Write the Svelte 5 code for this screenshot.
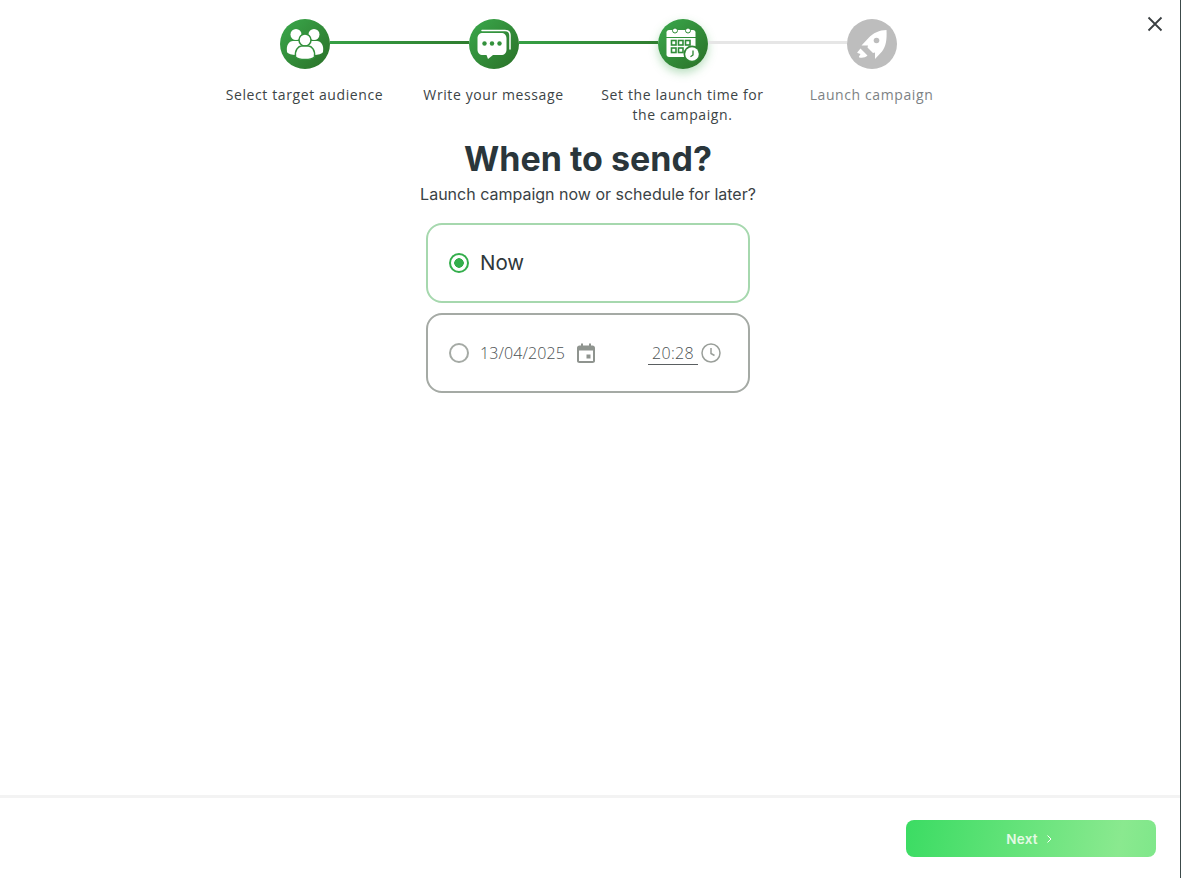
<script>
  const steps = [
    { icon: 'users', label: 'Select target audience', state: 'done' },
    { icon: 'chat', label: 'Write your message', state: 'done' },
    { icon: 'calendar', label: 'Set the launch time for the campaign.', state: 'current' },
    { icon: 'rocket', label: 'Launch campaign', state: 'todo' }
  ];
  const squares = [[13.5, 21.5], [20.5, 21.5], [27.5, 21.5], [13.5, 29], [20.5, 29]];
</script>

<div class="page">
  <button class="close" aria-label="Close">
    <svg width="16" height="16" viewBox="0 0 16 16"><path d="M1.500 1.500l13 13M14.500 1.500l-13 13" /></svg>
  </button>

  <main>
    <ol class="stepper">
      {#each steps as step, i}
        <li class="step {step.state}" class:last={i === steps.length - 1}>
          <div class="badge">
            <svg viewBox="0 0 50 50" width="50" height="50">
              {#if step.icon === 'users'}
                <circle cx="16" cy="15.500" r="5.500" fill="#fff" />
                <circle cx="34" cy="15.500" r="5.500" fill="#fff" />
                <path d="M7 33c-1-7 2-11 6-11h24c4 0 7 4 6 11-1 2-5 3-9 3H16c-4 0-8-1-9-3z" fill="#fff" />
                <circle cx="25" cy="21" r="6" fill="#fff" stroke="#33913c" stroke-width="1.500" />
                <path d="M15.500 38c-1-7 3-11 6-11h7c3 0 7 4 6 11-2 2-5 2.500-9.500 2.500s-7.500-.5-9.500-2.500z" fill="#fff" stroke="#33913c" stroke-width="1.500" />
              {:else if step.icon === 'chat'}
                <path d="M13 11.500h23c3 0 5 2 5 5V30" fill="none" stroke="#fff" stroke-width="1.500" stroke-linecap="round" />
                <path d="M14 14h18c3.500 0 5.500 2 5.500 5.500v11c0 3.500-2 5.500-5.500 5.500h-8l-5 4-1.500-4H14c-3.500 0-5.500-2-5.500-5.500v-11C8.500 16 10.500 14 14 14z" fill="#fff" />
                <circle cx="15.500" cy="24.500" r="2.200" fill="#33913c" />
                <circle cx="23" cy="24.500" r="2.200" fill="#33913c" />
                <circle cx="30.500" cy="24.500" r="2.200" fill="#33913c" />
              {:else if step.icon === 'calendar'}
                <path d="M11 11h24c1.500 0 2.500 1 2.500 2.500V18h-29v-4.500C8.500 12 9.500 11 11 11z" fill="#fff" />
                <path d="M8.500 19h29V31l-8 7H11c-1.500 0-2.500-1-2.500-2.500z" fill="#fff" />
                <circle cx="17" cy="11.500" r="2.500" fill="#fff" stroke="#2f8c38" />
                <circle cx="30" cy="11.500" r="2.500" fill="#fff" stroke="#2f8c38" />
                {#each squares as [x, y]}
                  <rect x={x} y={y} width="4.500" height="4.500" fill="none" stroke="#2f8c38" stroke-width="1.600" />
                {/each}
                <circle cx="34" cy="35" r="8.500" fill="#2f8633" />
                <circle cx="34" cy="35" r="6.800" fill="#fff" />
                <path d="M35 31.500V36l-2.500 1.800" fill="none" stroke="#2f8633" stroke-width="1.300" />
              {:else}
                <path d="M39.500 11c-7 0-13.500 3-18 8l-7 7.500h6.500l-.5 2 5.500 5.500 2-.5V40l7-7.500c4-5 5-12 4.500-21.500z" fill="#fff" />
                <circle cx="29.500" cy="21.500" r="2.800" fill="#bdbdbd" />
                <path d="M13.500 29.500l7 7c-2 2-5 2.500-8 2-.5 0-.5-.5-.5-1l1.500-2.500-3-1c-.5-.5 0-1 .5-1.500z" fill="#fff" />
              {/if}
            </svg>
          </div>
          <p class="label">{step.label}</p>
        </li>
      {/each}
    </ol>

    <h1>When to send?</h1>
    <p class="subtitle">Launch campaign now or schedule for later?</p>

    <div class="options">
      <label class="option selected">
        <span class="radio"></span>
        <span class="now">Now</span>
      </label>
      <div class="option later">
        <span class="radio"></span>
        <span class="date">13/04/2025</span>
        <svg class="cal" width="20" height="20" viewBox="0 0 20 20">
          <path d="M5 0.500h2V2.500h6V0.500h2V2.500h1.500C18 2.500 19 3.500 19 5v13c0 1-1 2-2.500 2h-13C2 20 1 19 1 18V5c0-1.500 1-2.500 2.500-2.500H5zM3 7.500V18h14V7.500z" fill="#8f948f" />
          <rect x="10.500" y="11.500" width="4" height="4" fill="#8f948f" />
        </svg>
        <span class="time">20:28</span>
        <svg class="clock" width="20" height="20" viewBox="0 0 20 20" fill="none" stroke="#9a9f9a" stroke-width="1.500">
          <circle cx="10" cy="10" r="9" />
          <path d="M10 5v5.500l3.500 2" />
        </svg>
      </div>
    </div>
  </main>

  <footer>
    <button class="next">Next
      <svg width="6" height="8" viewBox="0 0 6 8" fill="none" stroke="#fff" stroke-width="1"><path d="M1.500 0.500L5 4 1.500 7.500" /></svg>
    </button>
  </footer>
</div>

<style>
  :global(body) {
    margin: 0;
    background: #fff;
  }
  * {
    box-sizing: border-box;
  }
  .page {
    position: relative;
    display: flex;
    flex-direction: column;
    height: 878px;
    border-right: 1px solid #3c4a4a;
    font-family: Inter, "Liberation Sans", sans-serif;
    color: #2c3639;
  }
  .close {
    position: absolute;
    top: 16px;
    right: 17px;
    width: 16px;
    height: 16px;
    padding: 0;
    border: 0;
    background: none;
  }
  .close svg {
    display: block;
  }
  .close path {
    stroke: #3a3f42;
    stroke-width: 1.800;
    fill: none;
  }
  main {
    flex: 1;
    display: flex;
    flex-direction: column;
    align-items: center;
    padding: 19px 4px 0 0;
  }
  .stepper {
    display: grid;
    grid-template-columns: repeat(4, 189px);
    margin: 0;
    padding: 0;
    list-style: none;
  }
  .step {
    position: relative;
    display: flex;
    flex-direction: column;
    align-items: center;
  }
  .step:not(.last)::after {
    content: "";
    position: absolute;
    top: 22px;
    left: calc(50% + 25px);
    width: 139px;
    height: 3px;
    background: linear-gradient(90deg, #36a045, #2f7d2f);
  }
  .step.current::after {
    background: #e6e6e6;
  }
  .badge {
    width: 50px;
    height: 50px;
    border-radius: 50%;
    background: linear-gradient(135deg, #3aa94c, #2a7027);
  }
  .badge svg {
    display: block;
  }
  .current .badge {
    box-shadow: 0 4px 10px rgba(54, 163, 71, 0.35);
  }
  .todo .badge {
    background: #bdbdbd;
  }
  .label {
    width: 172px;
    margin: 16px 0 0;
    font-family: "Open Sans", sans-serif;
    font-size: 14px;
    line-height: 20px;
    letter-spacing: 0.6px;
    text-align: center;
    color: #3c4446;
  }
  .todo .label {
    color: #7d8284;
  }
  h1 {
    margin: 12px 0 0;
    font-size: 34px;
    line-height: 44px;
    font-weight: 700;
    color: #2a363b;
  }
  .subtitle {
    margin: 1px 0 0;
    font-size: 16px;
    line-height: 24px;
    color: #3a4245;
  }
  .options {
    display: flex;
    flex-direction: column;
    gap: 10px;
    width: 324px;
    margin-top: 17px;
  }
  .option {
    display: flex;
    align-items: center;
    height: 80px;
    padding: 0 27px 0 21px;
    border: 2px solid #a6d8ae;
    border-radius: 16px;
  }
  .option.later {
    border-color: #a5aaa5;
  }
  .radio {
    flex: none;
    width: 20px;
    height: 20px;
    margin-right: 11px;
    border: 2px solid #a5aaa5;
    border-radius: 50%;
  }
  .selected .radio {
    border-color: #34ae4c;
    background: radial-gradient(circle, #34ae4c 0 4.500px, #fff 5px);
  }
  .now {
    padding-bottom: 2px;
    font-size: 20.500px;
    color: #2f383b;
  }
  .date,
  .time {
    font-family: "Open Sans", sans-serif;
    font-size: 16px;
    font-weight: 300;
    letter-spacing: 0.1px;
    color: #4b5153;
  }
  .cal {
    margin-left: 11px;
  }
  .time {
    width: 50px;
    margin-left: auto;
    margin-right: 3px;
    border-bottom: 1px solid #5a5f61;
    line-height: 22px;
    letter-spacing: 0.3px;
    text-align: center;
  }
  footer {
    display: flex;
    justify-content: flex-end;
    height: 83px;
    padding: 22px 24px 0 0;
    border-top: 3px solid #f3f3f3;
  }
  .next {
    display: flex;
    align-items: center;
    justify-content: center;
    gap: 8px;
    width: 250px;
    height: 37px;
    padding: 0 4px 0 0;
    border: 0;
    border-radius: 8px;
    background: linear-gradient(100deg, #3bdc63 0%, #8ae98f 85%, #7fe78a 100%);
    font-family: Inter, sans-serif;
    font-size: 13.500px;
    font-weight: 600;
    letter-spacing: 0.2px;
    color: #e4f9e4;
  }
</style>
